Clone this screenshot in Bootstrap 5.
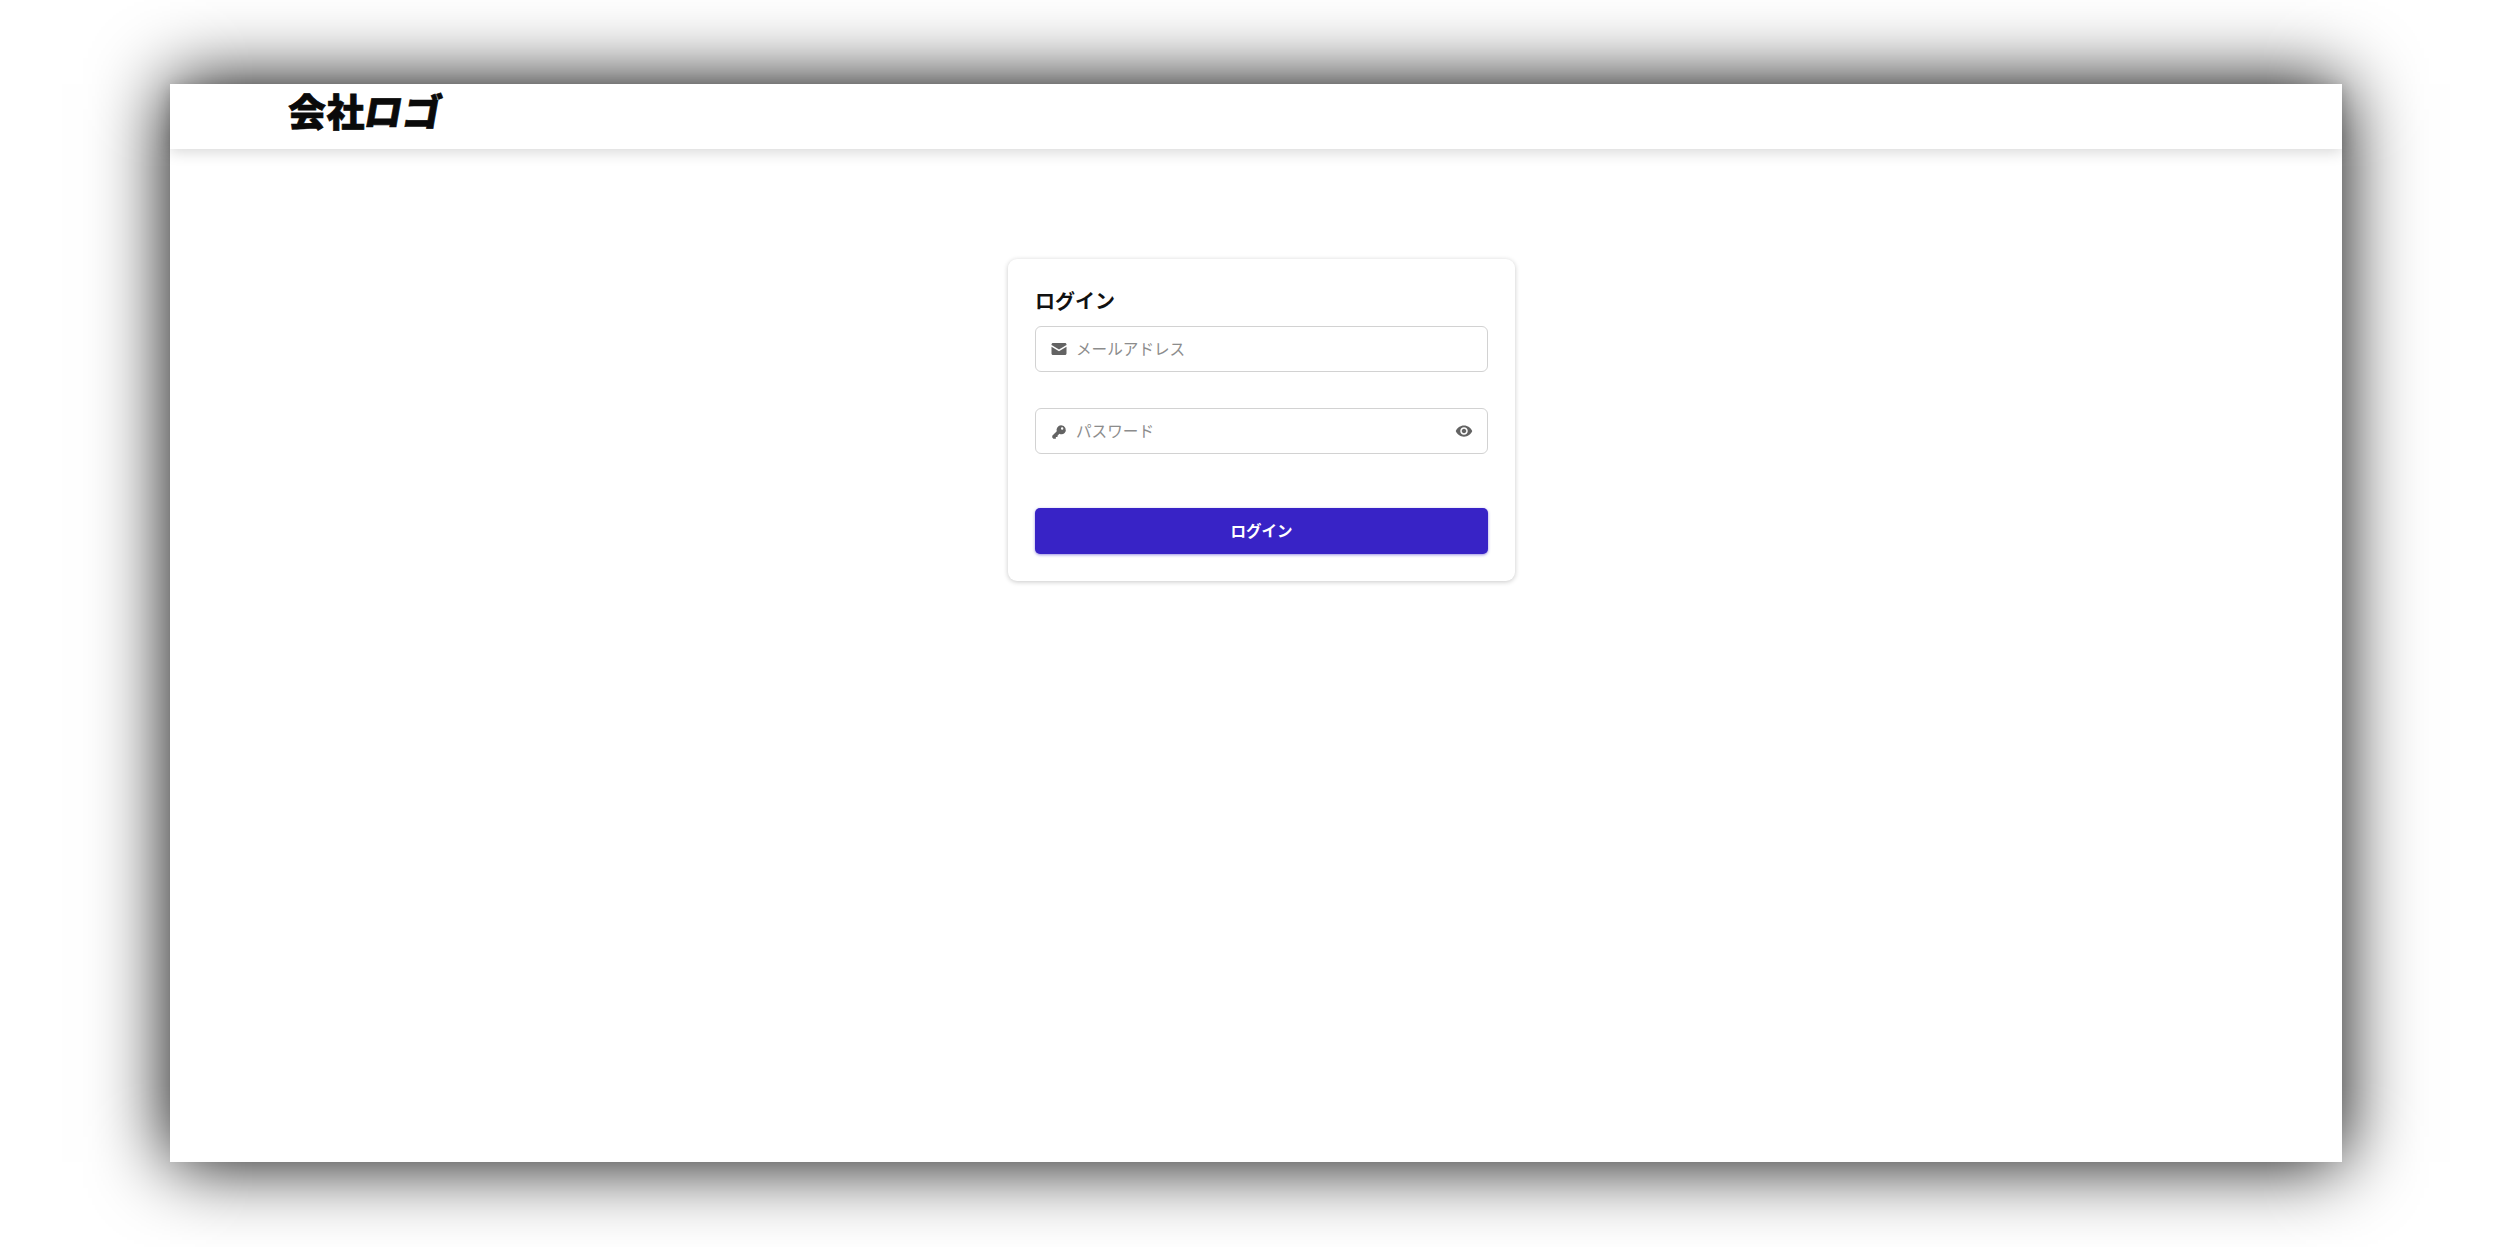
<!DOCTYPE html>
<html lang="ja">
<head>
  <meta charset="UTF-8" />
  <title>ログイン</title>
  <link href="https://cdn.jsdelivr.net/npm/bootstrap@5.3.3/dist/css/bootstrap.min.css" rel="stylesheet">
  <style>
    html, body { height: 100%; }
    body {
      background: #fff;
      padding: 84px 170px 85px;
      overflow: hidden;
      font-family: "Noto Sans CJK JP", "Liberation Sans", sans-serif;
    }
    .app-window {
      height: 1078px;
      background: #fff;
      box-shadow: 0 0 72px #000;
    }
    .app-header {
      height: 65px;
      background: #fff;
      padding-left: 118px;
      padding-bottom: 13px;
      box-shadow: 0 3px 14px rgba(0, 0, 0, .16);
    }
    .app-logo {
      font-size: 38px;
      font-weight: 900;
      line-height: 1;
      color: #0a0a0a;
      letter-spacing: .5px;
      -webkit-text-stroke: .7px #0a0a0a;
    }
    .logo-slant {
      display: inline-block;
      transform: skewX(-10deg);
    }
    .login-wrap { padding: 110px 0 0 11px; }
    .login-box {
      width: 507px;
      height: 322px;
      padding: 26px 27px 0;
      background: #fff;
      border-radius: 9px;
      box-shadow: 0 1px 5px rgba(0, 0, 0, .22);
    }
    .login-title {
      font-size: 20px;
      font-weight: 700;
      line-height: 32px;
      margin: 0 0 9px;
      color: #111;
    }
    .field-box {
      height: 46px;
      padding: 0 14px;
      border: 1.5px solid #d2d2d2;
      border-radius: 6px;
      gap: 8px;
      margin-bottom: 36px;
      color: #636363;
    }
    .field-box svg { width: 18px; height: 18px; flex: none; fill: currentColor; }
    .field-box input {
      border: 0;
      outline: 0;
      padding: 0;
      min-width: 0;
      background: transparent;
      font-size: 15.6px;
    }
    .field-box input::placeholder { color: #8c8c8c; opacity: 1; }
    .login-btn {
      height: 46px;
      margin-top: 54px;
      background: #3823c6;
      border: 0;
      border-radius: 5px;
      color: #fff;
      font-size: 15.5px;
      font-weight: 700;
      box-shadow: 0 1px 3px rgba(56, 35, 198, .5);
    }
    .login-btn:hover { background: #3823c6; color: #fff; }
    .field-gap-none { margin-bottom: 0; }
  </style>
</head>
<body>
  <div class="app-window d-flex flex-column">
    <header class="app-header d-flex align-items-center">
      <div class="app-logo">会社<span class="logo-slant">ロゴ</span></div>
    </header>
    <main class="login-wrap d-flex justify-content-center">
      <form class="login-box d-flex flex-column" onsubmit="return false">
        <h1 class="login-title">ログイン</h1>
        <div class="field-box d-flex align-items-center">
          <svg viewBox="0 0 24 24"><path d="M4 4h16c1.100 0 2 .9 2 2v.7l-10 6-10-6V6c0-1.100.9-2 2-2z"/><path d="M2 9l10 6 10-6v9c0 1.100-.9 2-2 2H4c-1.100 0-2-.9-2-2z"/></svg>
          <input class="flex-grow-1" type="email" placeholder="メールアドレス">
        </div>
        <div class="field-box field-gap-none d-flex align-items-center">
          <svg viewBox="0 0 24 24"><path fill-rule="evenodd" d="M15 4.500a6 6 0 0 1 4.500 10 6 6 0 0 1-7 1.200L10 18.200V20H7.800v2.200H4.500l-1.500-1.500v-2.400l6-6a6 6 0 0 1 6-7.800zM16.200 7a1.600 1.600 0 1 0 0 3.200 1.600 1.600 0 0 0 0-3.200z"/></svg>
          <input class="flex-grow-1" type="password" placeholder="パスワード">
          <svg viewBox="0 0 24 24"><path d="M12 4.500C7 4.500 2.730 7.610 1 12c1.730 4.390 6 7.500 11 7.500s9.270-3.110 11-7.500c-1.730-4.390-6-7.500-11-7.500zM12 17c-2.760 0-5-2.240-5-5s2.240-5 5-5 5 2.240 5 5-2.240 5-5 5zm0-8c-1.660 0-3 1.340-3 3s1.340 3 3 3 3-1.340 3-3-1.340-3-3-3z"/></svg>
        </div>
        <button class="btn login-btn w-100 d-flex align-items-center justify-content-center" type="submit">ログイン</button>
      </form>
    </main>
  </div>
  <script src="https://cdn.jsdelivr.net/npm/bootstrap@5.3.3/dist/js/bootstrap.bundle.min.js"></script>
</body>
</html>
